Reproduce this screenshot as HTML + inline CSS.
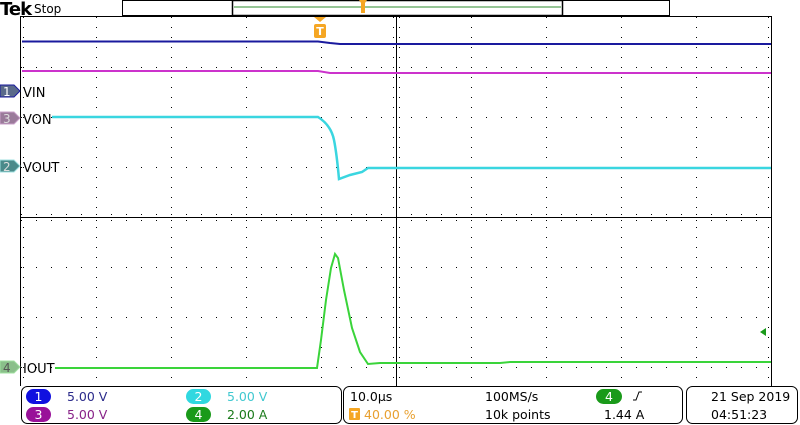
<!DOCTYPE html>
<html><head><meta charset="utf-8"><style>
html,body{margin:0;padding:0;background:#fff;width:800px;height:425px;overflow:hidden}
svg{display:block}
text{font-family:"DejaVu Sans","Liberation Sans",sans-serif}
</style></head><body>
<svg width="800" height="425" viewBox="0 0 800 425" xmlns="http://www.w3.org/2000/svg">
<!-- top bar -->
<text x="0" y="15" font-family="Liberation Serif,serif" font-weight="bold" font-size="18" letter-spacing="-1">Tek</text>
<text x="34" y="13" font-size="12">Stop</text>
<rect x="122.5" y="0.5" width="547" height="15" fill="none" stroke="#000"/>
<rect x="232.5" y="0.5" width="330" height="15" fill="none" stroke="#000" stroke-width="1.5"/>
<line x1="234" y1="7" x2="561" y2="7" stroke="#2e8b2e"/>
<path d="M359 0h8l-2 3v10h-4v-10z" fill="#f5a623"/>
<!-- graticule -->
<g stroke="#000" stroke-width="1" stroke-dasharray="1 14" fill="none">
<path d="M21 67.5H771M21 117.5H771M21 167.5H771M21 267.5H771M21 317.5H771M21 367.5H771"/>
</g>
<g stroke="#000" stroke-width="1" stroke-dasharray="1 9" fill="none">
<path d="M96.5 17V385M171.5 17V385M246.5 17V385M321.5 17V385M471.5 17V385M546.5 17V385M621.5 17V385M696.5 17V385"/>
</g>
<g stroke="#000" stroke-width="1" fill="none">
<path d="M21 16.5H771M20.5 16V386M771.5 16V386"/>
<path d="M21 217.5H771M396.5 17V386"/>
</g>
<g stroke="#000" stroke-dasharray="1 14" fill="none"><path d="M21 214.5H771M21 220.5H771"/></g>
<g stroke="#000" stroke-dasharray="1 9" fill="none"><path d="M393.5 17V386M399.5 17V386M23.5 17V386M768.5 17V386"/></g>
<!-- trigger marker -->
<path d="M314 17h12l-6 5z" fill="#f5a623"/>
<rect x="314" y="24" width="12" height="14" rx="2" fill="#f5a623"/>
<text x="320" y="35" font-size="11" fill="#fff" text-anchor="middle" font-weight="bold">T</text>
<!-- traces -->
<path d="M22 41.5H318L330 43L340 44H771" stroke="#1a1a9e" stroke-width="2" fill="none"/>
<path d="M22 71H318L330 73H771" stroke="#cc33cc" stroke-width="2" fill="none"/>
<path d="M52 117H318C326 122 332 130 334 140C336 150 338 168 339 179L350 175L362 172L368 168H771" stroke="#3ad6e0" stroke-width="2.5" fill="none"/>
<path d="M55 368H317L321 340L326 300L331 268L335 254L338 258L344 290L352 328L360 352L368 364L380 363H500L510 362H771" stroke="#3ad43a" stroke-width="2" fill="none"/>
<path d="M760 332l6 -4v8z" fill="#1a9a1a"/>
<!-- channel markers -->
<g font-size="12">
<path d="M0 85h14l6 6l-6 6h-14z" fill="#5a6a8a" stroke="#1a1a9e"/><text x="3" y="96" fill="#fff">1</text>
<path d="M0 112h14l6 6l-6 6h-14z" fill="#9a7a9a" stroke="#c9a0c9"/><text x="3" y="123" fill="#ddd">3</text>
<path d="M0 160h14l6 6l-6 6h-14z" fill="#4a8a8a" stroke="#a0e0e0"/><text x="3" y="171" fill="#ddd">2</text>
<path d="M0 361h14l6 6l-6 6h-14z" fill="#8abf8a" stroke="#a0e0a0"/><text x="3" y="372" fill="#555">4</text>
<text x="23" y="97" font-size="13">VIN</text>
<text x="23" y="124" font-size="13">VON</text>
<text x="23" y="172" font-size="13">VOUT</text>
<text x="23" y="373" font-size="13">IOUT</text>
</g>
<!-- bottom panels -->
<rect x="0" y="386" width="800" height="39" fill="#fff"/>
<rect x="21.5" y="386.5" width="320" height="37" rx="6" fill="#fff" stroke="#000"/>
<rect x="343.5" y="386.5" width="339" height="37" rx="6" fill="#fff" stroke="#000"/>
<rect x="686.5" y="386.5" width="111" height="37" rx="6" fill="#fff" stroke="#000"/>
<g font-size="12.5">
<rect x="26" y="389" width="25" height="15" rx="7.5" fill="#1010e0"/><text x="38.5" y="401" fill="#fff" text-anchor="middle">1</text>
<text x="67" y="401" fill="#2a2a8a">5.00 V</text>
<rect x="26" y="407" width="25" height="15" rx="7.5" fill="#991199"/><text x="38.5" y="419" fill="#fff" text-anchor="middle">3</text>
<text x="67" y="419" fill="#882288">5.00 V</text>
<rect x="186" y="389" width="25" height="15" rx="7.5" fill="#30d8e0"/><text x="198.5" y="401" fill="#fff" text-anchor="middle">2</text>
<text x="227" y="401" fill="#40c8d0">5.00 V</text>
<rect x="186" y="407" width="25" height="15" rx="7.5" fill="#1a9a1a"/><text x="198.5" y="419" fill="#fff" text-anchor="middle">4</text>
<text x="227" y="419" fill="#1a7a1a">2.00 A</text>
<text x="350" y="401">10.0µs</text>
<rect x="349" y="408" width="11" height="12" rx="1" fill="#f5a623"/><text x="354.5" y="418" fill="#fff" font-size="10" text-anchor="middle" font-weight="bold">T</text>
<text x="364" y="419" fill="#e8a030">40.00 %</text>
<text x="485" y="401">100MS/s</text>
<text x="485" y="419">10k points</text>
<rect x="596" y="389" width="26" height="15" rx="7.5" fill="#1a9a1a"/><text x="609" y="401" fill="#fff" text-anchor="middle">4</text>
<path d="M633 400h3l3 -8h3" stroke="#000" fill="none"/>
<text x="604" y="419">1.44 A</text>
<text x="711" y="401">21 Sep  2019</text>
<text x="711" y="419">04:51:23</text>
</g>
</svg>
</body></html>
